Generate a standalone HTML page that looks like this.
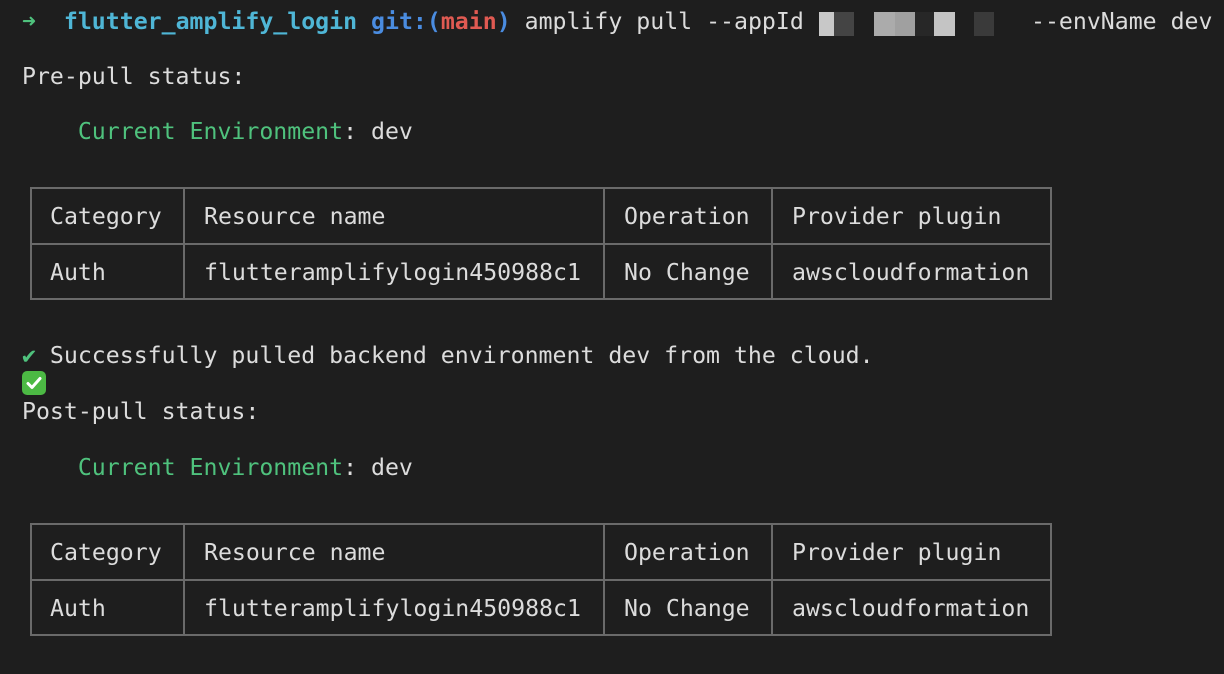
<!DOCTYPE html>
<html><head><meta charset="utf-8"><style>
html,body{margin:0;padding:0;background:#1e1e1e;width:1224px;height:674px;overflow:hidden}
body{position:relative;font-family:"DejaVu Sans Mono","Liberation Mono",monospace;font-size:23.2px;color:#dcdcdc}
.l{position:absolute;white-space:pre;line-height:28px;height:28px}
.g{color:#4fc27d}.c{color:#4fb6d6;font-weight:bold}.b{color:#4a8ce0;font-weight:bold}.r{color:#e05a52;font-weight:bold}
.t{position:absolute;left:30px;width:1022px;height:113px;border:2px solid #6a6a6a;box-sizing:border-box}
.h{position:absolute;left:0;right:0;top:54px;height:2px;background:#6a6a6a}
.v{position:absolute;top:0;bottom:0;width:2px;background:#6a6a6a}
.k{position:absolute;height:24px;top:12px}
.em{position:absolute;left:22px;width:24px;height:24px;background:#4cb944;border-radius:5px}
</style></head><body>
<div class="l" style="top:0px;left:22px;height:5px;overflow:hidden;color:#777;line-height:6px">__ _  _   __  _   _  _ __  __ _ _ _ _ _ _ _ _ _</div>
<div class="l" style="top:8px;left:22px"><span class="g">➜</span>  <span class="c">flutter_amplify_login</span> <span class="b">git:(</span><span class="r">main</span><span class="b">)</span> amplify pull --appId</div>
<div class="k" style="left:819px;width:15px;background:#c8c8c8"></div>
<div class="k" style="left:834px;width:20px;background:#444"></div>
<div class="k" style="left:874px;width:21px;background:#ababab"></div>
<div class="k" style="left:895px;width:20px;background:#a0a0a0"></div>
<div class="k" style="left:915px;width:19px;background:#272727"></div>
<div class="k" style="left:934px;width:21px;background:#c4c4c4"></div>
<div class="k" style="left:974px;width:20px;background:#3a3a3a"></div>
<div class="l" style="top:8px;left:1031px">--envName dev</div>

<div class="l" style="top:63px;left:22px">Pre-pull status:</div>
<div class="l" style="top:118px;left:22px">    <span class="g">Current Environment</span>: dev</div>

<div class="t" style="top:187px">
<div class="h"></div>
<div class="v" style="left:151px"></div><div class="v" style="left:571px"></div><div class="v" style="left:739px"></div>
</div>
<div class="l" style="top:203px;left:50px">Category</div>
<div class="l" style="top:203px;left:204px">Resource name</div>
<div class="l" style="top:203px;left:624px">Operation</div>
<div class="l" style="top:203px;left:792px">Provider plugin</div>
<div class="l" style="top:259px;left:50px">Auth</div>
<div class="l" style="top:259px;left:204px">flutteramplifylogin450988c1</div>
<div class="l" style="top:259px;left:624px">No Change</div>
<div class="l" style="top:259px;left:792px">awscloudformation</div>

<div class="l" style="top:342px;left:22px"><span class="g">✔</span> Successfully pulled backend environment dev from the cloud.</div>
<div class="em" style="top:371px"><svg width="24" height="24" viewBox="0 0 24 24"><path d="M6 12.5l4 4 8-9" stroke="#fff" stroke-width="3" fill="none" stroke-linecap="round" stroke-linejoin="round"/></svg></div>
<div class="l" style="top:398px;left:22px">Post-pull status:</div>
<div class="l" style="top:454px;left:22px">    <span class="g">Current Environment</span>: dev</div>

<div class="t" style="top:523px">
<div class="h"></div>
<div class="v" style="left:151px"></div><div class="v" style="left:571px"></div><div class="v" style="left:739px"></div>
</div>
<div class="l" style="top:539px;left:50px">Category</div>
<div class="l" style="top:539px;left:204px">Resource name</div>
<div class="l" style="top:539px;left:624px">Operation</div>
<div class="l" style="top:539px;left:792px">Provider plugin</div>
<div class="l" style="top:595px;left:50px">Auth</div>
<div class="l" style="top:595px;left:204px">flutteramplifylogin450988c1</div>
<div class="l" style="top:595px;left:624px">No Change</div>
<div class="l" style="top:595px;left:792px">awscloudformation</div>
</body></html>
